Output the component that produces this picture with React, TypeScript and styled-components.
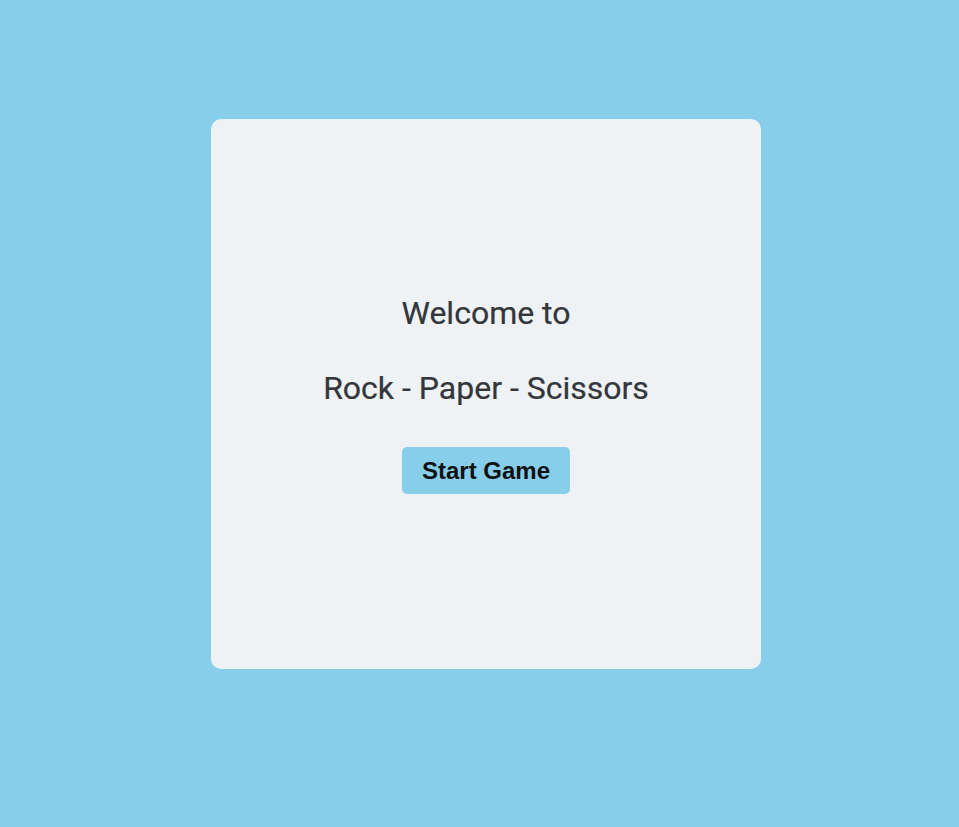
import React from "react";
import styled, { createGlobalStyle } from "styled-components";

const Global = createGlobalStyle`
  html, body { margin: 0; padding: 0; }
  body { background: #87ceeb; font-family: Roboto, "Liberation Sans", sans-serif; }
`;

const Page = styled.div`
  min-height: 827px;
  box-sizing: border-box;
  padding: 119px 0 0 211px;
`;

const Card = styled.div`
  width: 550px;
  height: 550px;
  background: #eef2f5;
  border-radius: 10px;
  display: flex;
  flex-direction: column;
  align-items: center;
  justify-content: center;
`;

const Title = styled.h1<{ $gap?: number }>`
  margin: ${(p) => p.$gap ?? 0}px 0 0;
  font-family: Roboto, sans-serif;
  font-weight: 400;
  font-size: 32px;
  line-height: 38px;
  color: #33363a;
  -webkit-text-stroke: 0.2px #33363a;
`;

const StartButton = styled.button`
  margin-top: 40px;
  height: 47px;
  width: 168px;
  padding: 0;
  border: none;
  border-radius: 5px;
  background: #87ceeb;
  color: #111;
  font-family: "Liberation Sans", Arial, sans-serif;
  font-weight: 700;
  font-size: 24px;
  cursor: pointer;
`;

export default function App() {
  return (
    <>
      <Global />
      <Page>
        <Card>
          <Title>Welcome to</Title>
          <Title $gap={37}>Rock - Paper - Scissors</Title>
          <StartButton>Start Game</StartButton>
        </Card>
      </Page>
    </>
  );
}
